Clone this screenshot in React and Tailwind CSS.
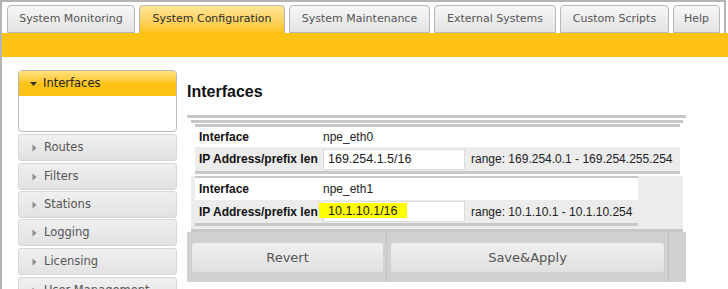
import React from 'react';

const tabs = [
  { label: 'System Monitoring', w: 'w-[128px]' },
  { label: 'System Configuration', w: 'w-[146px]', active: true },
  { label: 'System Maintenance', w: 'w-[141px]' },
  { label: 'External Systems', w: 'w-[122px]' },
  { label: 'Custom Scripts', w: 'w-[109px]' },
  { label: 'Help', w: 'w-[47px]' },
];

const menu = [
  { label: 'Routes', mt: 'mt-[2px]' },
  { label: 'Filters', mt: 'mt-[2px]' },
  { label: 'Stations', mt: 'mt-[1px]' },
  { label: 'Logging', mt: 'mt-[1px]' },
  { label: 'Licensing', mt: 'mt-[2px]' },
  { label: 'User Management', mt: 'mt-[2px]' },
];

function CaretRight() {
  return (
    <svg width="5" height="8" viewBox="0 0 5 8" className="shrink-0">
      <path d="M0.5 0.5 L4.5 4 L0.5 7.5 Z" fill="#8a8a8a" />
    </svg>
  );
}

function CaretDown() {
  return (
    <svg width="7" height="4" viewBox="0 0 7 4" className="shrink-0">
      <path d="M0 0 L7 0 L3.5 4 Z" fill="#333" />
    </svg>
  );
}

function Field({ value, highlight }) {
  return (
    <div className="relative w-[142px] h-[21px] bg-white border border-[#dcdcdc] flex items-center pl-[4px] text-[12.5px] text-[#1a1a1a]">
      {highlight && <span className="absolute left-[-5px] top-[1px] w-[88px] h-[15px] bg-[#ffff00]" />}
      <span className="relative">{value}</span>
    </div>
  );
}

function IfaceRows({ name, ip, range, highlight, wide }) {
  return (
    <>
      <div className={`flex items-center bg-white ${wide ? 'h-[20px]' : 'h-[22px]'}`}>
        <div className="w-[128px] pl-[4px] font-bold text-[#111]">Interface</div>
        <div className="text-[#222]">{name}</div>
      </div>
      <div className={`flex items-center bg-[#ececec] ${wide ? 'h-[24px]' : 'h-[23px]'}`}>
        <div className="w-[128px] pl-[4px] font-bold text-[#111] whitespace-nowrap">IP Address/prefix len</div>
        <Field value={ip} highlight={highlight} />
        <div className="ml-[6px] text-[#222] whitespace-nowrap">{range}</div>
      </div>
    </>
  );
}

export default function App() {
  return (
    <div className="w-[728px] h-[289px] overflow-hidden bg-white border-l-2 border-[#b4b4b4] font-['DejaVu_Sans',sans-serif]">
      {/* tab strip */}
      <div className="w-[724px] h-[33px] border-t-2 border-r-2 border-[#b4b4b4] pl-[5px] pt-[3px] flex gap-[4px] items-end">
        {tabs.map((t) => (
          <div
            key={t.label}
            className={`${t.w} h-[28px] shrink-0 flex items-center justify-center rounded-t-[4px] border border-[#b8b8b8] text-[11px] whitespace-nowrap ${
              t.active
                ? 'border-b-0 bg-gradient-to-b from-[#ffe695] to-[#fdc213] text-[#2a2a2a]'
                : 'bg-gradient-to-b from-[#f6f6f6] to-[#e3e3e3] text-[#555]'
            }`}
          >
            {t.label}
          </div>
        ))}
      </div>
      <div className="h-[24px] bg-[#fdc212]" />

      <div className="flex pl-[16px] pt-[13px] gap-[10px]">
        {/* sidebar */}
        <div className="w-[159px] shrink-0">
          <div className="h-[62px] rounded-[4px] border border-[#b9b9b9] overflow-hidden bg-white">
            <div className="h-[25px] bg-gradient-to-b from-[#ffe27a] via-[#fdc415] to-[#fdc212] flex items-center gap-[6px] pl-[11px] text-[11.5px] text-[#222]">
              <CaretDown />
              <span>Interfaces</span>
            </div>
          </div>
          {menu.map((m) => (
            <div
              key={m.label}
              className={`${m.mt} h-[27px] rounded-[3px] border border-[#d6d6d6] bg-gradient-to-b from-[#f0f0f0] to-[#e2e2e2] flex items-center gap-[7px] pl-[13px] text-[11.5px] text-[#555]`}
            >
              <CaretRight />
              <span>{m.label}</span>
            </div>
          ))}
        </div>

        {/* main */}
        <div className="w-[499px] shrink-0 font-['Liberation_Sans',Arial,sans-serif] text-[12px]">
          <h1 className="mt-[14px] h-[16px] leading-[16px] text-[16px] font-bold text-[#111]">Interfaces</h1>
          <div className="mt-[15px] h-[3px] bg-[#c8c8c8]" />
          <div className="mt-[2px] ml-[4px] w-[492px] h-[3px] bg-[#c8c8c8]" />

          <div className="mt-[1px] ml-[8px] w-[485px]">
            <div className="h-[3px] bg-[#c8c8c8]" />
            <IfaceRows
              wide
              name="npe_eth0"
              ip="169.254.1.5/16"
              range="range: 169.254.0.1 - 169.254.255.254"
            />
            <div className="h-[3px] bg-[#c8c8c8]" />
          </div>

          <div className="mt-[2px] ml-[4px] w-[492px] bg-[#ececec]">
            <div className="ml-[4px] w-[443px]">
              <div className="h-[2px] bg-[#c8c8c8]" />
              <IfaceRows
                name="npe_eth1"
                ip="10.1.10.1/16"
                range="range: 10.1.10.1 - 10.1.10.254"
                highlight
              />
              <div className="h-[3px] bg-[#c8c8c8]" />
            </div>
            <div className="h-[3px]" />
            <div className="h-[3px] bg-[#c8c8c8]" />
          </div>

          <div className="h-[50px] bg-[#d1d1d1] flex font-['DejaVu_Sans',sans-serif] text-[13px] text-[#555]">
            <div className="w-[200px] border-r border-[#c3c3c3] pl-[5px] pt-[11px]">
              <div className="w-[191px] h-[29px] rounded-[3px] bg-gradient-to-b from-[#efefef] to-[#e1e1e1] flex items-center justify-center">
                Revert
              </div>
            </div>
            <div className="w-[282px] border-r border-[#c3c3c3] pl-[4px] pt-[11px]">
              <div className="w-[273px] h-[29px] rounded-[3px] bg-gradient-to-b from-[#efefef] to-[#e1e1e1] flex items-center justify-center">
                Save&amp;Apply
              </div>
            </div>
            <div className="flex-1" />
          </div>
        </div>
      </div>
    </div>
  );
}
